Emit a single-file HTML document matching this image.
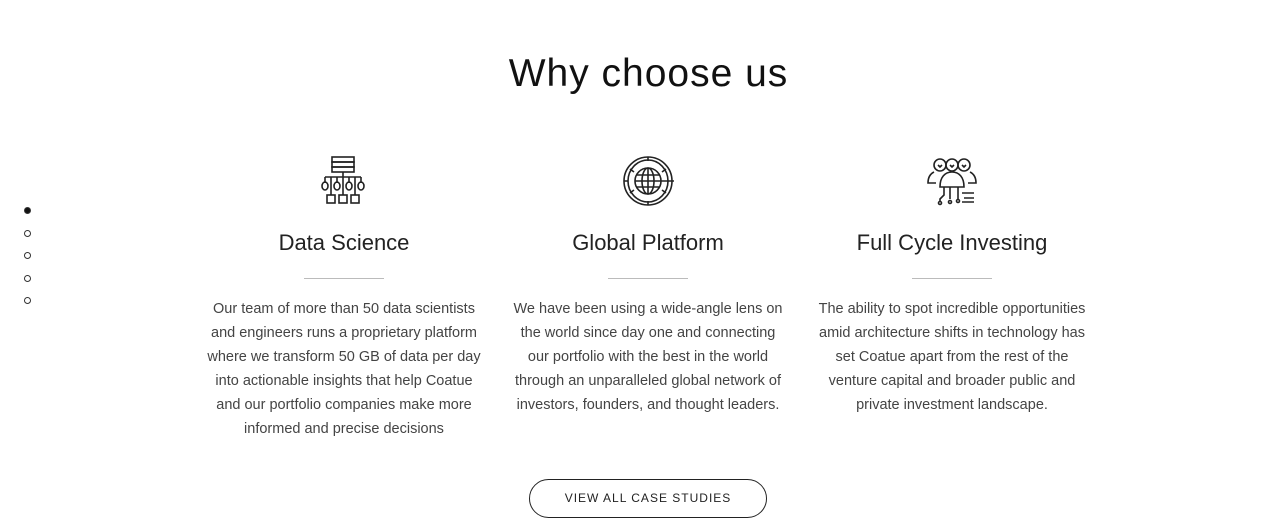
<!DOCTYPE html>
<html><head><style>
body{margin:0;width:1287px;height:521px;background:#fff;position:relative;overflow:hidden;font-family:"Liberation Sans",sans-serif;color:#222}
h1{position:absolute;top:52px;left:0;width:1297px;text-align:center;margin:0;font-weight:400;font-size:39px;letter-spacing:1px;color:#111}
.col{position:absolute;top:155px;width:290px;text-align:center}
.col svg{display:block;margin:0 auto}
.col h2{margin:21px 0 0;font-weight:400;font-size:22px;color:#222;line-height:30px}
.col hr{width:80px;border:0;border-top:1.5px solid #bbb;margin:20px auto 18px}
.col p{margin:0 auto;width:278px;font-size:14.5px;line-height:24px;color:#444}
.dots{position:absolute;left:24px;top:207px}
.dots i{display:block;width:5px;height:5px;border:1px solid #333;border-radius:50%;margin-bottom:15.5px}
.btn{position:absolute;left:529px;top:479px;width:236px;height:37px;border:1px solid #222;border-radius:20px;text-align:center;line-height:37px;font-size:12px;letter-spacing:1px;color:#222}
</style></head><body>
<h1>Why choose us</h1>
<div class="dots"><i style="background:#111"></i><i></i><i></i><i></i><i></i></div>
<div class="col" style="left:199px">
<svg width="52" height="52" viewBox="0 0 52 52" fill="none" stroke="#222" stroke-width="1.6"><rect x="14" y="2" width="22" height="5"/><rect x="14" y="7" width="22" height="5"/><rect x="14" y="12" width="22" height="5"/><path d="M25 17v5M7 22h36M7 22v6M19 22v6M31 22v6M43 22v6M13 22v18M25 22v18M37 22v18"/><ellipse cx="7" cy="31" rx="3" ry="4"/><ellipse cx="19" cy="31" rx="3" ry="4"/><ellipse cx="31" cy="31" rx="3" ry="4"/><ellipse cx="43" cy="31" rx="3" ry="4"/><rect x="9" y="40" width="8" height="8"/><rect x="21" y="40" width="8" height="8"/><rect x="33" y="40" width="8" height="8"/></svg>
<h2>Data Science</h2><hr>
<p>Our team of more than 50 data scientists and engineers runs a proprietary platform where we transform 50 GB of data per day into actionable insights that help Coatue and our portfolio companies make more informed and precise decisions</p></div>
<div class="col" style="left:503px">
<svg width="52" height="52" viewBox="0 0 52 52" fill="none" stroke="#222" stroke-width="1.6"><ellipse cx="26" cy="26" rx="24" ry="24"/><ellipse cx="26" cy="26" rx="20" ry="21"/><ellipse cx="26" cy="26" rx="13" ry="13"/><ellipse cx="26" cy="26" rx="6" ry="13"/><path d="M13 26h39M14 20h24M14 32h24M26 13v26M26 2v4M26 46v4M8 14l4 3M44 14l-4 3M8 38l4-3M44 38l-4-3M2 26h4"/></svg>
<h2>Global Platform</h2><hr>
<p>We have been using a wide-angle lens on the world since day one and connecting our portfolio with the best in the world through an unparalleled global network of investors, founders, and thought leaders.</p></div>
<div class="col" style="left:807px">
<svg width="52" height="52" viewBox="0 0 52 52" fill="none" stroke="#222" stroke-width="1.6"><circle cx="14" cy="10" r="6"/><circle cx="26" cy="10" r="6"/><circle cx="38" cy="10" r="6"/><path d="M12 10l2 2 2-2M24 10l2 2 2-2M36 10l2 2 2-2"/><path d="M8 17c-4 2-6 6-6 11h8M44 17c4 2 6 6 6 11h-8M14 32c0-10 5-15 12-15s12 5 12 15z"/><path d="M18 32v8l-4 4v3M24 32v12M32 32v12"/><circle cx="14" cy="48" r="1.5"/><circle cx="24" cy="47" r="1.5"/><circle cx="32" cy="46" r="1.5"/><path d="M36 38h12M38 43h10M36 47h12"/></svg>
<h2>Full Cycle Investing</h2><hr>
<p>The ability to spot incredible opportunities amid architecture shifts in technology has set Coatue apart from the rest of the venture capital and broader public and private investment landscape.</p></div>
<div class="btn">VIEW ALL CASE STUDIES</div>
</body></html>
